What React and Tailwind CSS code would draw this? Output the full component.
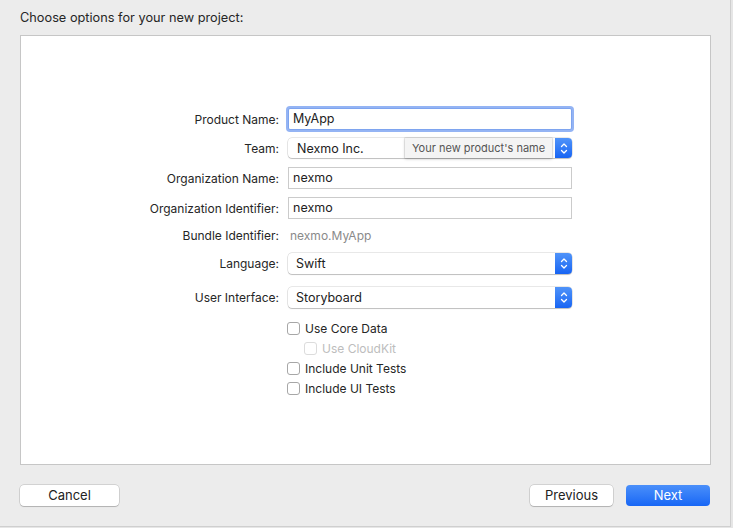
import React from 'react';

const font = { fontFamily: 'Inter, "Liberation Sans", sans-serif' };

const Stepper = () => (
  <div className="w-[17px] h-full rounded-r-[4px] bg-gradient-to-b from-[#4f93f9] to-[#1764f3] flex items-center justify-center">
    <svg width="8" height="13" viewBox="0 0 8 13" fill="none" stroke="white" strokeWidth="1.3" strokeLinecap="round" strokeLinejoin="round">
      <path d="M1.5 4.5 L4 2 L6.5 4.5" />
      <path d="M1.5 8.5 L4 11 L6.5 8.5" />
    </svg>
  </div>
);

const Popup = ({ value, className = '', textClass = 'pl-[8px] pt-[1px]' }) => (
  <div className={`w-[284px] flex bg-white rounded-[4px] shadow-[0_0_0_0.5px_rgba(0,0,0,0.18),0_1px_1px_rgba(0,0,0,0.18)] ${className}`}>
    <div className={`flex-1 flex items-center text-[12.5px] text-[#222] ${textClass}`}>{value}</div>
    <Stepper />
  </div>
);

const TextField = ({ value, focused }) => (
  <div
    className={`w-[284px] h-[22px] bg-white flex items-center pl-[4px] pt-[1px] text-[12.5px] text-[#222] ${
      focused
        ? 'border border-[#7ea4ef] rounded-[2px] shadow-[0_0_0_2px_rgba(112,155,240,0.75)]'
        : 'border border-[#cbcbcb]'
    }`}
  >
    {value}
  </div>
);

const Row = ({ label, children, className = '', labelClass = 'text-[#262626]' }) => (
  <div className={`grid grid-cols-[258px_284px] gap-x-[9px] items-center ${className}`}>
    <div className={`text-right text-[12px] pt-[1px] ${labelClass}`}>{label}</div>
    <div className="h-full flex items-center">{children}</div>
  </div>
);

const Check = ({ label, disabled, className = '' }) => (
  <div className={`h-[20px] flex items-center gap-[5px] ${className}`}>
    <div
      className={`w-[13px] h-[13px] rounded-[3px] bg-white border ${
        disabled ? 'border-[#dcdcdc]' : 'border-[#a7a7a7]'
      }`}
    />
    <span className={`text-[12px] pt-[1px] ${disabled ? 'text-[#bdbdbd]' : 'text-[#262626]'}`}>{label}</span>
  </div>
);

const Button = ({ children, primary, className = '' }) => (
  <div
    className={`h-[21px] rounded-[4px] flex items-center justify-center text-[13px] ${
      primary
        ? 'bg-gradient-to-b from-[#4a8ffa] to-[#1766f5] text-white'
        : 'bg-white text-[#222] shadow-[0_0_0_0.5px_rgba(0,0,0,0.22),0_1px_1px_rgba(0,0,0,0.15)]'
    } ${className}`}
  >
    {children}
  </div>
);

export default function App() {
  return (
    <div className="w-[733px] h-[528px] bg-[#e6e6e6]" style={font}>
      <div className="w-[731px] h-[527px] bg-[#ececec] border-r border-b border-[#cfcfcf] flex flex-col">
        <div className="h-[35px] pl-[20px] flex items-center text-[12.75px] text-[#262626]">
          Choose options for your new project:
        </div>

        <div className="ml-[20px] w-[691px] h-[430px] bg-white border border-[#c6c6c6] pt-[72px] flex flex-col">
          <Row label="Product Name:" className="h-[22px]">
            <TextField value="MyApp" focused />
          </Row>

          <Row label="Team:" className="h-[20px] mt-[8px] relative">
            <Popup value="Nexmo Inc." className="h-[20px]" textClass="pl-[9px] pt-[3px]" />
            <div className="absolute left-[384px] top-0 w-[147px] h-[20px] bg-[#f4f4f4] shadow-[0_0_0_0.5px_rgba(0,0,0,0.15),0_1px_3px_rgba(0,0,0,0.2)] flex items-center pl-[7px] text-[11px] text-[#555]">
              Your new product's name
            </div>
          </Row>

          <Row label="Organization Name:" className="h-[22px] mt-[9px]">
            <TextField value="nexmo" />
          </Row>

          <Row label="Organization Identifier:" className="h-[22px] mt-[8px]">
            <TextField value="nexmo" />
          </Row>

          <Row label="Bundle Identifier:" className="h-[18px] mt-[7px]">
            <span className="pl-[2px] pt-[1px] text-[12px] text-[#8a8a8a]">nexmo.MyApp</span>
          </Row>

          <Row label="Language:" className="h-[21px] mt-[9px]">
            <Popup value="Swift" className="h-[21px]" />
          </Row>

          <Row label="User Interface:" className="h-[21px] mt-[13px]">
            <Popup value="Storyboard" className="h-[21px]" />
          </Row>

          <div className="mt-[10px] pl-[266px] flex flex-col">
            <Check label="Use Core Data" />
            <Check label="Use CloudKit" disabled className="pl-[17px]" />
            <Check label="Include Unit Tests" />
            <Check label="Include UI Tests" />
          </div>
        </div>

        <div className="mt-[20px] px-[20px] flex items-center">
          <Button className="w-[99px]">Cancel</Button>
          <div className="flex-1" />
          <Button className="w-[83px]">Previous</Button>
          <Button primary className="w-[84px] ml-[13px]">Next</Button>
        </div>
      </div>
    </div>
  );
}
